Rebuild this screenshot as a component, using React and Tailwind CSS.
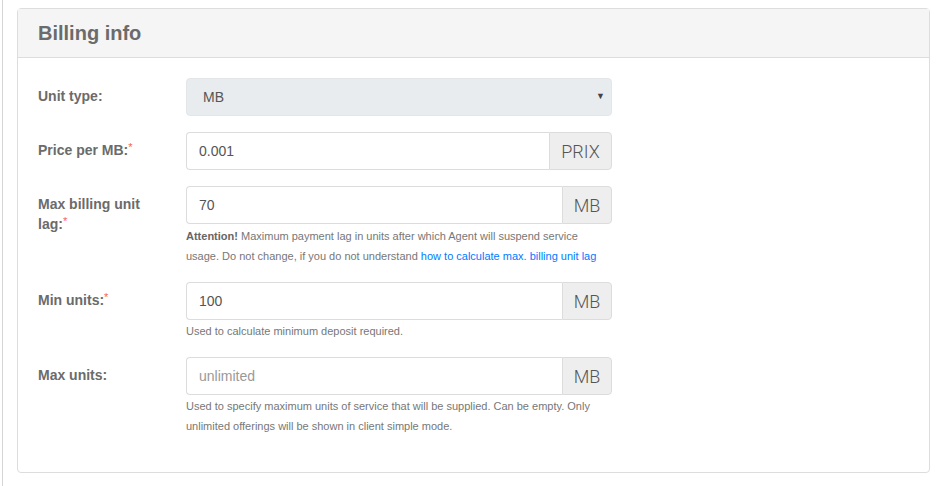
import React from 'react';

const Label = ({ children, required }) => (
  <label className="w-[148px] shrink-0 pr-[15px] pt-[8px] text-[14px] font-bold leading-[20px] text-[#6b6b6b]">
    {children}
    {required && <span className="align-top text-[11px] font-normal leading-[14px] text-[#ff5c5c]">*</span>}
  </label>
);

const Addon = ({ children, width }) => (
  <div
    className={`flex ${width} shrink-0 items-center justify-center rounded-r-[4px] border border-[#dcdcdc] bg-[#eeeeee] font-['Roboto'] text-[18px] font-light text-[#555]`}
  >
    {children}
  </div>
);

const Help = ({ children, top = 'mt-[1px]' }) => (
  <div className={`${top} text-[11px] leading-[20px] text-[#777]`}>{children}</div>
);

const InputGroup = ({ value, placeholder, unit, unitWidth }) => (
  <div className="flex h-[38px] w-[426px]">
    <input
      className="h-full min-w-0 flex-1 rounded-l-[4px] border border-r-0 border-[#dcdcdc] bg-white px-[12px] text-[14px] text-[#555] placeholder:text-[#999] focus:outline-none"
      defaultValue={value}
      placeholder={placeholder}
    />
    <Addon width={unitWidth}>{unit}</Addon>
  </div>
);

const App = () => {
  return (
    <div className="min-h-[486px] bg-white font-['Liberation_Sans',Arial,sans-serif]">
      <div className="ml-[2px] min-h-[486px] border-l border-[#d4d4d4] pl-[14px] pr-[13px] pt-[8px] pb-[13px]">
        <div className="w-[913px] rounded-[4px] border border-[#dddddd] bg-white">
          <div className="flex h-[49px] items-center border-b border-[#dddddd] bg-[#f5f5f5] px-[20px]">
            <h2 className="text-[20px] font-bold text-[#6b6b6b]">Billing info</h2>
          </div>
          <div className="px-[20px] pt-[20px] pb-[20px]">
            <div className="mb-[16px] flex">
              <Label>Unit type:</Label>
              <div className="relative flex h-[38px] w-[426px] items-center rounded-[4px] border border-[#e3e6e9] bg-[#e9ecef] pl-[16px] text-[14px] text-[#555]">
                MB
                <span className="absolute right-[6px] top-[13px] text-[9px] leading-none text-[#444]">▼</span>
              </div>
            </div>

            <div className="mb-[16px] flex">
              <Label required>Price per MB:</Label>
              <InputGroup value="0.001" unit="PRIX" unitWidth="w-[63px]" />
            </div>

            <div className="mb-[16px] flex">
              <Label required>Max billing unit lag:</Label>
              <div className="w-[426px]">
                <InputGroup value="70" unit="MB" unitWidth="w-[50px]" />
                <Help top="mt-[2px]">
                  <b className="text-[#666]">Attention!</b> Maximum payment lag in units after which Agent will suspend service
                  usage. Do not change, if you do not understand{' '}
                  <a href="#" className="text-[#007bff]">how to calculate max. billing unit lag</a>
                </Help>
              </div>
            </div>

            <div className="mb-[16px] flex">
              <Label required>Min units:</Label>
              <div className="w-[426px]">
                <InputGroup value="100" unit="MB" unitWidth="w-[50px]" />
                <Help>Used to calculate minimum deposit required.</Help>
              </div>
            </div>

            <div className="mb-[16px] flex">
              <Label>Max units:</Label>
              <div className="w-[426px]">
                <InputGroup placeholder="unlimited" unit="MB" unitWidth="w-[50px]" />
                <Help>
                  Used to specify maximum units of service that will be supplied. Can be empty. Only unlimited offerings
                  will be shown in client simple mode.
                </Help>
              </div>
            </div>
          </div>
        </div>
      </div>
    </div>
  );
};

export default App;
